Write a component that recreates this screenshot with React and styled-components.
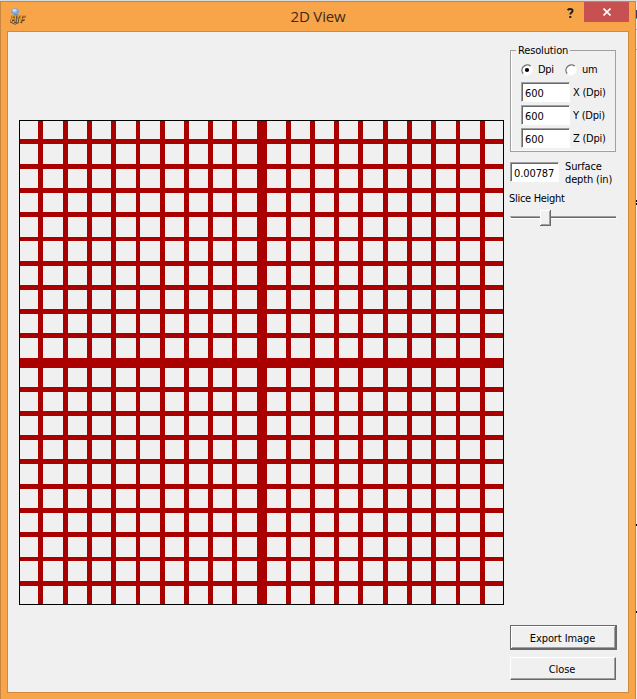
import React from "react";
import styled, { createGlobalStyle } from "styled-components";

const Global = createGlobalStyle`
  *{box-sizing:border-box}
  body{margin:0;background:#d9d9d9;overflow:hidden;font-family:"DejaVu Sans Condensed","DejaVu Sans",sans-serif;font-stretch:condensed;font-size:11px;color:#000}
`;
const Desktop = styled.div`
  width:637px;height:699px;padding-top:1px;display:flex;background:#dcdcdc;
`;
const Edge = styled.svg`display:block;flex:none;`;
const Window = styled.div`
  width:636px;height:698px;background:#f8a54a;
  border:1px solid #c78540;border-bottom:0;padding:0 6px 6px;
  display:flex;flex-direction:column;
`;
const TitleBar = styled.header`
  height:29px;flex:none;display:grid;grid-template-columns:60px 1fr 60px;align-items:start;
`;
const AppIcon = styled.svg`margin:5px 0 0 3px;display:block;`;
const Title = styled.h1`
  margin:4px 0 0;text-align:center;font:400 15px/20px "Open Sans",sans-serif;color:#3b2b1b;letter-spacing:-.15px;
`;
const Controls = styled.div`display:flex;justify-content:flex-end;`;
const Help = styled.svg`margin:6px 10px 0 0;display:block;flex:none;`;
const CloseX = styled.button`
  width:45px;height:20px;flex:none;border:0;padding:0;background:#c75050;display:grid;place-items:center;
`;
const Client = styled.main`
  height:662px;border:1px solid #cf8a40;background:#f0f0f0;display:flex;
`;
const Canvas = styled.svg`display:block;margin:88px 0 0 11px;flex:none;`;
const Side = styled.aside`
  width:107px;margin:12px 0 12px 6px;display:flex;flex-direction:column;
`;
const Group = styled.fieldset`
  margin:0;padding:0 0 0 10px;border:1px solid #a0a0a0;box-shadow:inset 1px 0 #fff,inset 0 -1px #f8f8f8;height:108px;width:106px;min-width:0;
`;
const Legend = styled.legend`
  margin-left:-5px;padding:0 2px;height:12px;line-height:14px;letter-spacing:-.15px;
`;
const Radios = styled.div`display:flex;height:20px;margin-top:4px;align-items:center;`;
const Choice = styled.label`
  display:flex;align-items:center;gap:5px;width:${p => p.$w}px;letter-spacing:-.3px;line-height:14px;
`;
const Field = styled.div`
  display:flex;align-items:center;gap:3px;height:20px;margin:${p => (p.$first ? 2 : 0)}px 0 3px;letter-spacing:-.25px;white-space:nowrap;
`;
const Input = styled.input`
  width:${p => p.$w}px;height:20px;flex:none;padding:2px 0 0 3px;border:1px solid;
  border-color:#a0a0a0 #fff #fff #a0a0a0;border-radius:0;outline:0;background:#fff;
  box-shadow:inset 1px 1px #696969;font:inherit;letter-spacing:-.1px;color:#000;
`;
const Depth = styled.div`
  display:flex;gap:6px;margin-top:8px;height:26px;align-items:flex-start;
`;
const DepthInput = styled(Input)`margin-top:2px;`;
const DepthLabel = styled.div`line-height:13px;letter-spacing:-.15px;white-space:nowrap;`;
const SliceLabel = styled.div`margin:6px 0 0 -1px;line-height:14px;letter-spacing:-.3px;`;
const Slider = styled.svg`display:block;`;
const Actions = styled.div`margin-top:auto;display:flex;flex-direction:column;gap:7px;`;
const Button = styled.button`
  width:${p => (p.$primary ? 107 : 106)}px;height:${p => (p.$primary ? 25 : 23)}px;
  padding:1px 2px 0 0;font:inherit;letter-spacing:-.1px;color:#000;
  background:#f0f0f0;border-radius:0;border:1px solid;
  border-color:${p => (p.$primary ? "#696969" : "#fff #696969 #696969 #fff")};
  box-shadow:${p => (p.$primary ? "inset -1px -1px #696969,inset 1px 1px #fff,inset -2px -2px #a0a0a0" : "inset -1px -1px #a0a0a0")};
`;

const lines = [
  [19, 5], [44, 5], [68, 5], [92, 5], [117, 4], [141, 5], [165, 5], [189, 5], [213, 5], [238, 10],
  [267, 5], [291, 5], [315, 5], [339, 5], [364, 5], [388, 5], [412, 5], [437, 4], [461, 5],
];

const Radio = ({ checked }) => (
  <svg width="12" height="12" viewBox="0 0 12 12">
    <circle cx="6" cy="6" r="5" fill="#fff" />
    <path d="M2.2 9.8A5.4 5.4 0 0 1 9.8 2.2" fill="none" stroke="#777" strokeWidth="1.4" />
    <path d="M9.8 2.2A5.4 5.4 0 0 1 2.2 9.8" fill="none" stroke="#fff" />
    {checked && <circle cx="6" cy="6" r="2.1" fill="#000" />}
  </svg>
);

export default function App() {
  return (
    <Desktop>
      <Global />
      <Window>
        <TitleBar>
          <AppIcon width="17" height="18" viewBox="0 0 17 18">
            <ellipse cx="5" cy="4.500" rx="4" ry="3.200" fill="#79a9df" />
            <ellipse cx="4.500" cy="3.500" rx="2.200" ry="1.400" fill="#c3dcf5" />
            <path d="M4 7h4v9H4z" fill="#7187a5" />
            <path d="M2 16q3 2.500 6 0" stroke="#4d5968" fill="none" />
            <path d="M1 16l1.500-6.500h3L5 16M2 13h3M8.500 9l-1 7M6.500 9.500h4M11 16l1.200-6.500H15.500M11.500 13h3" stroke="#5b3a1b" strokeWidth="2.200" fill="none" />
            <path d="M1 15.300l1.500-6.500h3l-.5 6.500M2 12h3M8.300 8.500l-1 6.800M6.500 8.800h4M10.500 15.300l1.200-6.500H15M11 12h3" stroke="#f5a52d" strokeWidth="1.200" fill="none" />
          </AppIcon>
          <Title>2D View</Title>
          <Controls>
            <Help width="7" height="10" viewBox="0 0 7 10">
              <path d="M.6 2.200Q1.500 1 3.200 1Q5.600 1 5.600 2.800Q5.600 3.800 4.300 4.600Q3.300 5.200 3.300 6.600" fill="none" stroke="#1e1e1e" strokeWidth="1.900" />
              <path d="M2.300 8h2v2h-2z" fill="#1e1e1e" />
            </Help>
            <CloseX aria-label="Close window">
              <svg width="8" height="8" viewBox="0 0 8 8"><path d="M.5.5l7 7M7.500.5l-7 7" stroke="#fff" strokeWidth="1.600" /></svg>
            </CloseX>
          </Controls>
        </TitleBar>
        <Client>
          <Canvas width="485" height="485" viewBox="0 0 485 485" shapeRendering="crispEdges">
            <g fill="#aa0000">
              {lines.map(([at, size]) => (
                <React.Fragment key={at}>
                  <rect x={at} y="1" width={size} height="483" />
                  <rect x="1" y={at} width="483" height={size} />
                </React.Fragment>
              ))}
            </g>
            <rect x=".5" y=".5" width="484" height="484" fill="none" stroke="#000" />
          </Canvas>
          <Side>
            <Group>
              <Legend>Resolution</Legend>
              <Radios>
                <Choice $w={44}><Radio checked />Dpi</Choice>
                <Choice $w={40}><Radio />um</Choice>
              </Radios>
              {["X", "Y", "Z"].map((axis, i) => (
                <Field key={axis} $first={i === 0}><Input $w={49} defaultValue="600" />{axis} (Dpi)</Field>
              ))}
            </Group>
            <Depth>
              <DepthInput $w={49} defaultValue="0.00787" />
              <DepthLabel>Surface<br />depth (in)</DepthLabel>
            </Depth>
            <SliceLabel>Slice Height</SliceLabel>
            <Slider width="107" height="21" viewBox="0 0 107 21" shapeRendering="crispEdges">
              <path d="M0 10.500h106" stroke="#a0a0a0" />
              <path d="M1 11.500h105" stroke="#696969" />
              <path d="M0 12.500h107" stroke="#fff" />
              <path d="M30 4h11v16H30z" fill="#696969" />
              <path d="M30 4h10v15H30z" fill="#fff" />
              <path d="M31 5h9v14h-9z" fill="#a0a0a0" />
              <path d="M31 5h8v13h-8z" fill="#f0f0f0" />
            </Slider>
            <Actions>
              <Button $primary>Export Image</Button>
              <Button>Close</Button>
            </Actions>
          </Side>
        </Client>
      </Window>
      <Edge width="1" height="698" viewBox="0 0 1 698" shapeRendering="crispEdges">
        <path d="M0 0h1v698H0z" fill="#eee" />
        <path d="M0 9h1v4H0z" fill="#303878" />
        <path d="M0 13h1v4H0z" fill="#642850" />
        <path d="M0 17h1v1H0z" fill="#3fa6e0" />
        <path d="M0 28h1v1H0zM0 48h1v1H0z" fill="#aaa" />
        <path d="M0 199h1v2H0zM0 202h1v2H0zM0 523h1v2H0zM0 610h1v2H0z" fill="#000" />
      </Edge>
    </Desktop>
  );
}
